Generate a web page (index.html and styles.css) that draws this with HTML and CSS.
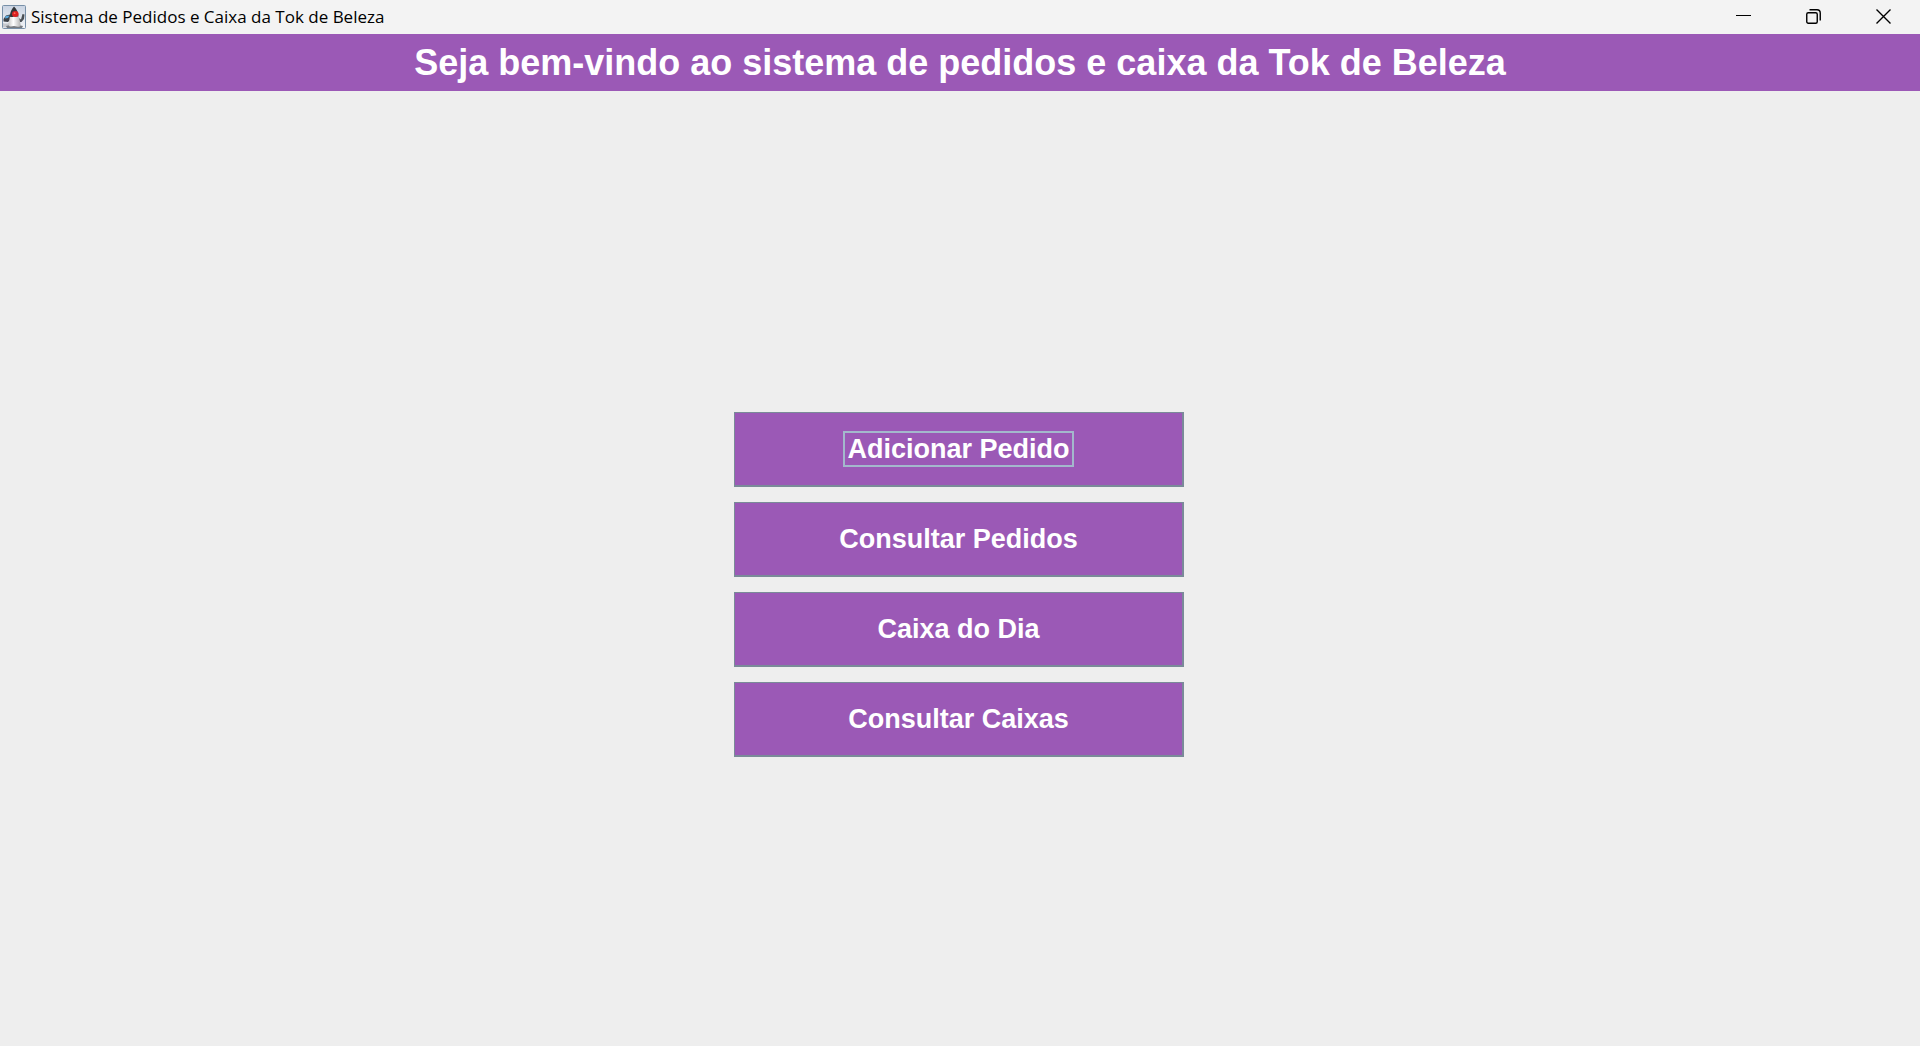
FILE: index.html
```html
<!DOCTYPE html>
<html lang="pt-BR">
<head>
<meta charset="utf-8">
<meta name="viewport" content="width=device-width, initial-scale=1">
<title>Sistema de Pedidos e Caixa da Tok de Beleza</title>
<link rel="stylesheet" href="styles.css">
</head>
<body>
<div class="titlebar">
  <svg class="app-icon" width="24" height="24" viewBox="0 0 24 24" aria-hidden="true">
    <defs>
      <linearGradient id="tile" x1="0" y1="0" x2="0" y2="1">
        <stop offset="0" stop-color="#c9d3e2"/>
        <stop offset="1" stop-color="#f4f5f7"/>
      </linearGradient>
      <linearGradient id="belly" x1="0" y1="0" x2="1" y2="0">
        <stop offset="0" stop-color="#c8c8c8"/>
        <stop offset=".4" stop-color="#ffffff"/>
        <stop offset="1" stop-color="#b5b5b5"/>
      </linearGradient>
    </defs>
    <rect x=".5" y=".5" width="23" height="23" rx="1" fill="url(#tile)" stroke="#7890a8"/>
    <path d="M1 18Q4 19 7 18V22.500H1Z" fill="#c5c8cd"/>
    <path d="M4 21Q12 18 21 21L20 23H5Z" fill="#777b80"/>
    <path d="M8 9.500L4 10.500L1.500 14L1.500 16.500L6 17L9 14Z" fill="#3c4045"/>
    <path d="M3.500 11L7.500 10.500L6 13L3 13.500Z" fill="#58a7dc"/>
    <path d="M16 12.500L19 14.500L20.500 9L22.500 9.500L22 14L19.500 17L17 17Z" fill="#4b5055"/>
    <path d="M8 10.500Q7.500 15 6.500 19Q6.500 22 9 21.500L12 21L16 21.800Q19 22 18.500 19Q18 14 16 10.500Z" fill="url(#belly)"/>
    <path d="M12 1.500Q8.500 5 7.600 11.500Q9.500 12.500 12 11.500L16.500 11.500Q16 5 12 1.500Z" fill="#33363a"/>
    <ellipse cx="13.300" cy="9" rx="3.300" ry="2.900" fill="#dc2020"/>
    <circle cx="12.600" cy="8.200" r=".9" fill="#ff6a58"/>
  </svg>
  <span class="window-title">Sistema de Pedidos e Caixa da Tok de Beleza</span>
  <div class="window-controls">
    <button class="window-button" type="button" aria-label="Minimizar">
      <svg width="15" height="15" viewBox="0 0 15 15"><path d="M0 6.500H15"/></svg>
    </button>
    <button class="window-button" type="button" aria-label="Restaurar">
      <svg width="15" height="15" viewBox="0 0 15 15"><rect x=".75" y="3.750" width="10.500" height="10.500" rx="1.500" class="thick"/><path class="thick" d="M3.500 .75H11Q14.250 .75 14.250 4V11.500"/></svg>
    </button>
    <button class="window-button" type="button" aria-label="Fechar">
      <svg width="15" height="15" viewBox="0 0 15 15"><path class="thick" d="M.5 .5L14.500 14.500M14.500 .5L.5 14.500"/></svg>
    </button>
  </div>
</div>
<header class="banner"><h1 class="welcome">Seja bem-vindo ao sistema de pedidos e caixa da Tok de Beleza</h1></header>
<main class="content">
  <nav class="menu" aria-label="Menu principal">
    <button class="menu-button" type="button"><span class="label focused">Adicionar Pedido</span></button>
    <button class="menu-button" type="button"><span class="label">Consultar Pedidos</span></button>
    <button class="menu-button" type="button"><span class="label">Caixa do Dia</span></button>
    <button class="menu-button" type="button"><span class="label">Consultar Caixas</span></button>
  </nav>
</main>
</body>
</html>
```
FILE: styles.css
```css
* {
  box-sizing: border-box;
}

body {
  margin: 0;
  min-height: 100vh;
  display: flex;
  flex-direction: column;
  background: #eeeeee;
  font-family: "Liberation Sans", Arial, sans-serif;
}

.titlebar {
  display: flex;
  align-items: center;
  height: 34px;
  padding: 0 2px;
  background: #f3f3f3;
}

.app-icon {
  flex: none;
  margin-right: 5px;
}

.window-title {
  flex: 1;
  font-family: "Segoe UI", "Open Sans", sans-serif;
  font-size: 17px;
  line-height: 24px;
  color: #000;
}

.window-controls {
  display: flex;
  align-self: stretch;
}

.window-button {
  display: flex;
  align-items: center;
  justify-content: center;
  width: 70px;
  padding: 0 0 1px;
  border: 0;
  background: transparent;
}

.window-button svg {
  fill: none;
  stroke: #000;
  stroke-width: 1;
}

.window-button .thick {
  stroke-width: 1.4;
}

.banner {
  padding: 8px 16px;
  background: #9b59b6;
}

.welcome {
  margin: 0;
  font-size: 36px;
  line-height: 41px;
  font-weight: bold;
  text-align: center;
  color: #fff;
}

.content {
  flex: 1;
  display: flex;
  align-items: center;
  justify-content: center;
  padding: 32px 2px 0 0;
}

.menu {
  display: flex;
  flex-direction: column;
  gap: 15px;
  width: 450px;
  max-width: 100%;
}

.menu-button {
  display: flex;
  align-items: center;
  justify-content: center;
  height: 75px;
  padding: 0;
  border: solid #7a8a99;
  border-width: 1px 2px 2px 1px;
  background: #9b59b6;
  color: #fff;
  font: bold 27px/32px "Liberation Sans", Arial, sans-serif;
}

.label {
  padding: 0 2px;
  border: 2px solid transparent;
}

.focused {
  border-color: #a3b8cc;
}
```
